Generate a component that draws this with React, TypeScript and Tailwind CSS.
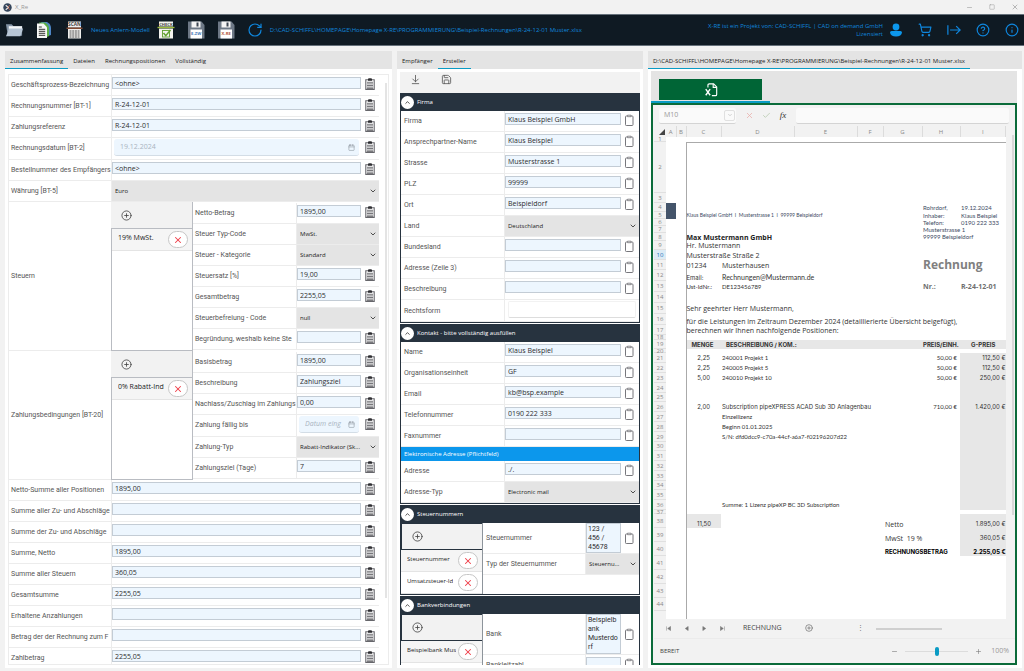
import { useState } from 'react';
import type { ReactNode } from 'react';
import {
    ArrowDownToLine,
    Calendar,
    Check,
    ChevronDown,
    ChevronUp,
    CircleHelp,
    CirclePlus,
    Info,
    Minus,
    Plus,
    RotateCw,
    Save,
    ShoppingCart,
    Square,
    X,
} from 'lucide-react';

const FILE_PATH = 'D:\\CAD-SCHIFFL\\HOMEPAGE\\Homepage X-RE\\PROGRAMMIERUNG\\Beispiel-Rechnungen\\R-24-12-01 Muster.xlsx';

type FieldKind = 'text' | 'select' | 'date' | 'area' | 'plain';

interface Field {
    id: string;
    label: string;
    value?: string;
    kind?: FieldKind;
    lines?: number;
}

interface Cell {
    col: number;
    text?: string;
    cls?: string;
    fill?: boolean;
}

interface SheetRow {
    h: number;
    cells?: Cell[];
}

const headFields: Field[] = [
    { id: 'bt23', label: 'Geschäftsprozess-Bezeichnung', value: '<ohne>' },
    { id: 'bt1', label: 'Rechnungsnummer [BT-1]', value: 'R-24-12-01' },
    { id: 'zref', label: 'Zahlungsreferenz', value: 'R-24-12-01' },
    { id: 'bt2', label: 'Rechnungsdatum [BT-2]', value: '19.12.2024', kind: 'date' },
    { id: 'bestell', label: 'Bestellnummer des Empfängers', value: '<ohne>' },
    { id: 'bt5', label: 'Währung [BT-5]', value: 'Euro', kind: 'select' },
];

const taxFields: Field[] = [
    { id: 'st-netto', label: 'Netto-Betrag', value: '1895,00' },
    { id: 'st-typ', label: 'Steuer Typ-Code', value: 'MwSt.', kind: 'select' },
    { id: 'st-kat', label: 'Steuer - Kategorie', value: 'Standard', kind: 'select' },
    { id: 'st-satz', label: 'Steuersatz [%]', value: '19,00' },
    { id: 'st-gesamt', label: 'Gesamtbetrag', value: '2255,05' },
    { id: 'st-frei', label: 'Steuerbefreiung - Code', value: 'null', kind: 'select' },
    { id: 'st-grund', label: 'Begründung, weshalb keine Ste' },
];

const paymentFields: Field[] = [
    { id: 'z-basis', label: 'Basisbetrag', value: '1895,00' },
    { id: 'z-beschr', label: 'Beschreibung', value: 'Zahlungsziel' },
    { id: 'z-nachlass', label: 'Nachlass/Zuschlag im Zahlungs', value: '0,00' },
    { id: 'z-faellig', label: 'Zahlung fällig bis', kind: 'date' },
    { id: 'z-typ', label: 'Zahlung-Typ', value: 'Rabatt-Indikator (Sk...', kind: 'select' },
    { id: 'z-ziel', label: 'Zahlungsziel (Tage)', value: '7' },
];

const sumFields: Field[] = [
    { id: 'sum-pos', label: 'Netto-Summe aller Positionen', value: '1895,00' },
    { id: 'sum-zu1', label: 'Summe aller Zu- und Abschläge' },
    { id: 'sum-zu2', label: 'Summe der Zu- und Abschläge' },
    { id: 'sum-netto', label: 'Summe, Netto', value: '1895,00' },
    { id: 'sum-steuer', label: 'Summe aller Steuern', value: '360,05' },
    { id: 'sum-gesamt', label: 'Gesamtsumme', value: '2255,05' },
    { id: 'sum-anz', label: 'Erhaltene Anzahlungen' },
    { id: 'sum-betrag', label: 'Betrag der der Rechnung zum F' },
    { id: 'sum-zahl', label: 'Zahlbetrag', value: '2255,05' },
];

const companyFields: Field[] = [
    { id: 'f-firma', label: 'Firma', value: 'Klaus Beispiel GmbH' },
    { id: 'f-name', label: 'Ansprechpartner-Name', value: 'Klaus Beispiel' },
    { id: 'f-str', label: 'Strasse', value: 'Musterstrasse 1' },
    { id: 'f-plz', label: 'PLZ', value: '99999' },
    { id: 'f-ort', label: 'Ort', value: 'Beispieldorf' },
    { id: 'f-land', label: 'Land', value: 'Deutschland', kind: 'select' },
    { id: 'f-bl', label: 'Bundesland' },
    { id: 'f-z3', label: 'Adresse (Zeile 3)' },
    { id: 'f-beschr', label: 'Beschreibung' },
    { id: 'f-rf', label: 'Rechtsform', kind: 'plain' },
];

const contactFields: Field[] = [
    { id: 'k-name', label: 'Name', value: 'Klaus Beispiel' },
    { id: 'k-org', label: 'Organisationseinheit', value: 'GF' },
    { id: 'k-mail', label: 'Email', value: 'kb@bsp.example' },
    { id: 'k-tel', label: 'Telefonnummer', value: '0190 222 333' },
    { id: 'k-fax', label: 'Faxnummer' },
];

const addressFields: Field[] = [
    { id: 'e-adr', label: 'Adresse', value: './.' },
    { id: 'e-typ', label: 'Adresse-Typ', value: 'Electronic mail', kind: 'select' },
];

const taxNumberFields: Field[] = [
    { id: 'sn-nr', label: 'Steuernummer', value: '123 /\n456 /\n45678', kind: 'area', lines: 3 },
    { id: 'sn-typ', label: 'Typ der Steuernummer', value: 'Steuernu...', kind: 'select' },
];

const bankFields: Field[] = [
    { id: 'b-bank', label: 'Bank', value: 'Beispielb\nank\nMusterdo\nrf', kind: 'area', lines: 4 },
    { id: 'b-blz', label: 'Bankleitzahl', value: '' },
];

const columns = [
    { name: 'A', w: 'w-[10px]' },
    { name: 'B', w: 'w-[10px]' },
    { name: 'C', w: 'w-[35px]' },
    { name: 'D', w: 'w-[73px]' },
    { name: 'E', w: 'w-[63px]' },
    { name: 'F', w: 'w-[26px]' },
    { name: 'G', w: 'w-[39px]' },
    { name: 'H', w: 'w-[38px]' },
    { name: 'I', w: 'w-auto' },
];

const wide = "font-['Inter',sans-serif]";
const body = "text-[7px] font-['Open_Sans',sans-serif]";
const small = 'pl-px text-[6px] text-[#3c4a63]';

const position = (menge: string, text: string, preis: string, gesamt: string): Cell[] => [
    { col: 2, text: menge, cls: `justify-end pr-[11px] ${wide}` },
    { col: 3, text, cls: 'pl-px' },
    { col: 7, text: preis, cls: 'justify-end pr-[3px]' },
    { col: 8, text: gesamt, cls: `justify-end ${wide}`, fill: true },
];

const grey: Cell[] = [{ col: 8, fill: true }];

const rows: SheetRow[] = [
    { h: 5 },
    { h: 51 },
    { h: 10 },
    { h: 9, cells: [{ col: 7, text: 'Rohrdorf,', cls: small }, { col: 8, text: '19.12.2024', cls: small }] },
    {
        h: 7,
        cells: [
            { col: 2, text: 'Klaus Beispiel GmbH  I  Musterstrasse 1  I  99999 Beispieldorf', cls: 'text-[5px] text-[#3c4a63]' },
            { col: 7, text: 'Inhaber:', cls: small },
            { col: 8, text: 'Klaus Beispiel', cls: small },
        ],
    },
    { h: 7, cells: [{ col: 7, text: 'Telefon:', cls: small }, { col: 8, text: '0190 222 333', cls: small }] },
    { h: 7, cells: [{ col: 7, text: 'Musterstrasse 1', cls: small }] },
    {
        h: 8,
        cells: [
            { col: 2, text: 'Max Mustermann GmbH', cls: `${body} font-bold text-[#222]` },
            { col: 7, text: '99999 Beispieldorf', cls: small },
        ],
    },
    { h: 9, cells: [{ col: 2, text: 'Hr. Mustermann', cls: body }] },
    { h: 10, cells: [{ col: 2, text: 'Musterstraße Straße 2', cls: body }] },
    {
        h: 10,
        cells: [
            { col: 2, text: '01234', cls: body },
            { col: 3, text: 'Musterhausen', cls: `pl-px ${body}` },
            { col: 7, text: 'Rechnung', cls: "pl-px font-['Open_Sans',sans-serif] text-[12px] font-bold text-[#808080]" },
        ],
    },
    { h: 11, cells: [{ col: 2, text: 'Email:', cls: `items-end ${wide}` }, { col: 3, text: 'Rechnungen@Mustermann.de', cls: 'items-end pl-px text-[7px]' }] },
    {
        h: 11,
        cells: [
            { col: 2, text: 'Ust-IdNr.:' },
            { col: 3, text: 'DE123456789', cls: 'pl-px' },
            { col: 7, text: 'Nr.:', cls: `pl-px ${body} font-bold text-[#6f6f6f]` },
            { col: 8, text: 'R-24-12-01', cls: `pl-px ${body} font-bold text-[#6f6f6f]` },
        ],
    },
    { h: 11 },
    { h: 11, cells: [{ col: 2, text: 'Sehr geehrter Herr Mustermann,', cls: body }] },
    {
        h: 11,
        cells: [{ col: 2, text: 'für die Leistungen im Zeitraum Dezember 2024 (detaillierierte Übersicht beigefügt),', cls: `items-end ${body}` }],
    },
    { h: 10, cells: [{ col: 2, text: 'berechnen wir Ihnen nachfolgende Positionen:', cls: body }] },
    { h: 5 },
    {
        h: 9,
        cells: [
            { col: 2, text: 'MENGE', cls: `pl-[5px] font-bold ${wide}`, fill: true },
            { col: 3, text: 'BESCHREIBUNG / KOM.:', cls: `pl-[5px] font-bold ${wide}`, fill: true },
            { col: 4, fill: true },
            { col: 5, fill: true },
            { col: 6, fill: true },
            { col: 7, text: 'PREIS/EINH.', cls: `pl-px font-bold ${wide}`, fill: true },
            { col: 8, text: 'G-PREIS', cls: `pl-[11px] font-bold ${wide}`, fill: true },
        ],
    },
    { h: 4 },
    { h: 10, cells: position('2,25', '240001 Projekt 1', '50,00 €', '112,50 €') },
    { h: 10, cells: position('2,25', '240005 Projekt 5', '50,00 €', '112,50 €') },
    { h: 10, cells: position('5,00', '240010 Projekt 10', '50,00 €', '250,00 €') },
    { h: 10, cells: grey },
    { h: 9, cells: grey },
    {
        h: 10,
        cells: [
            { col: 2, text: '2,00', cls: `justify-end pr-[11px] ${wide}` },
            { col: 3, text: 'Subscription pipeXPRESS ACAD Sub 3D Anlagenbau', cls: `pl-px ${wide}` },
            { col: 7, text: '710,00 €', cls: 'justify-end pr-[3px]' },
            { col: 8, text: '1.420,00 €', cls: `justify-end ${wide}`, fill: true },
        ],
    },
    { h: 10, cells: [{ col: 3, text: 'Einzellizenz', cls: 'pl-px' }, ...grey] },
    { h: 10, cells: [{ col: 3, text: 'Beginn 01.01.2025', cls: 'pl-px' }, ...grey] },
    { h: 10, cells: [{ col: 3, text: 'S/N: dfd0dcc9-c70a-44cf-a6a7-f02196207d22', cls: 'pl-px' }, ...grey] },
    { h: 9, cells: grey },
    { h: 10, cells: grey },
    { h: 10, cells: grey },
    { h: 10, cells: grey },
    { h: 9, cells: grey },
    { h: 10, cells: grey },
    { h: 10, cells: [{ col: 3, text: 'Summe: 1 Lizenz pipeXP BC 3D Subscription', cls: 'pl-px' }, ...grey] },
    { h: 4 },
    {
        h: 14,
        cells: [
            { col: 2, text: '11,50', cls: `items-end justify-end pr-[10px] pb-px ${wide}`, fill: true },
            { col: 6, text: 'Netto', cls: `items-end pl-[2px] ${body}` },
            { col: 8, text: '1.895,00 €', cls: `items-end justify-end pb-px ${wide}`, fill: true },
        ],
    },
    {
        h: 14,
        cells: [
            { col: 6, text: 'MwSt  19 %', cls: `items-end pl-[2px] ${body}` },
            { col: 8, text: '360,05 €', cls: `items-end justify-end pb-px ${wide}`, fill: true },
        ],
    },
    {
        h: 14,
        cells: [
            { col: 6, text: 'RECHNUNGSBETRAG', cls: `items-end pb-px pl-[2px] font-bold text-black ${wide}` },
            { col: 8, text: '2.255,05 €', cls: `items-end justify-end pb-px font-bold text-black ${wide}`, fill: true },
        ],
    },
    { h: 14 },
    { h: 14 },
    { h: 14 },
    { h: 13 },
];

function ClipboardFilled() {
    return (
        <svg viewBox="0 0 10 12" className="h-3 w-[10px]">
            <path d="M.8 1.8h8.4v9.6H.8z" fill="#fff" stroke="#66666b" strokeWidth="1.1" />
            <path d="M3 .6h1.1a1 1 0 0 1 1.8 0H7v2.2H3z" fill="#2f2f33" />
            <path d="M2 4.3h6M2 5.9h6M2 7.5h6M2 9.1h6M2 10.4h6" stroke="#55555a" strokeWidth=".8" />
        </svg>
    );
}

function ClipboardOutline() {
    return (
        <svg viewBox="0 0 10 12" className="h-3 w-[10px]" fill="none" stroke="#77777c">
            <rect x="1.5" y="2" width="7.5" height="9.5" rx=".8" />
            <path d="M3.5 1.2H7v1.5H3.5z" fill="#fff" strokeWidth=".8" />
        </svg>
    );
}

function FieldRow({ field, outline = false, labelClass }: { field: Field; outline?: boolean; labelClass: string }) {
    const kind = field.kind ?? 'text';
    const [value, setValue] = useState(field.value ?? '');
    const box = 'min-w-0 flex-1 border border-[#c3ccd5] bg-[#edf6fe] text-[7px] text-[#2e2e2e] outline-none';

    let height = 'h-[21px]';
    if (kind === 'area') height = field.lines === 4 ? 'h-[41px]' : 'h-[31px]';
    if (kind === 'date' || kind === 'plain') height = 'h-[22px]';

    return (
        <div className={`flex shrink-0 border-b border-[#ececec] ${height}`}>
            <label
                htmlFor={field.id}
                className={`flex shrink-0 items-center overflow-hidden font-['Roboto',sans-serif] text-[7px] whitespace-nowrap text-[#555] ${outline ? 'pt-px pl-[3px]' : 'pl-[2px]'} ${labelClass}`}
            >
                {field.label}
            </label>
            <div className="flex min-w-0 flex-1 border-l border-[#ececec]">
                {kind === 'select' && (
                    <div className="relative min-w-0 flex-1">
                        <select
                            id={field.id}
                            value={value}
                            onChange={(e) => setValue(e.target.value)}
                            className="block h-5 w-full appearance-none bg-[#e4e4e4] pl-[3px] text-[6px] text-[#222] outline-none"
                        >
                            <option>{field.value}</option>
                        </select>
                        <ChevronDown className="pointer-events-none absolute top-[6px] right-[2px] h-2 w-2 text-[#444]" strokeWidth={2.8} />
                    </div>
                )}
                {kind === 'plain' && (
                    <input
                        id={field.id}
                        value={value}
                        onChange={(e) => setValue(e.target.value)}
                        className="mx-[3px] mt-px h-[17px] min-w-0 flex-1 rounded-[2px] border border-[#f2f2f2] border-b-[#ddd] text-[7px] outline-none"
                    />
                )}
                {kind === 'date' && (
                    <div className="mx-[2px] mt-px flex h-[17px] min-w-0 flex-1 items-center rounded-[3px] border-b border-[#d3dde6] bg-[#edf6fe] pr-1 pl-[6px]">
                        <input
                            id={field.id}
                            value={value}
                            placeholder="Datum eing"
                            onChange={(e) => setValue(e.target.value)}
                            className="w-0 min-w-0 flex-1 bg-transparent text-[7px] text-[#a9b4be] outline-none placeholder:text-[#a9b4be] placeholder:italic"
                        />
                        <Calendar className="h-[7px] w-[7px] shrink-0 text-[#8d969e]" />
                    </div>
                )}
                {kind === 'text' && (
                    <input
                        id={field.id}
                        value={value}
                        onChange={(e) => setValue(e.target.value)}
                        className={`mt-[2px] h-3 px-[2px] ${box}`}
                    />
                )}
                {kind === 'area' && (
                    <textarea
                        id={field.id}
                        value={value}
                        onChange={(e) => setValue(e.target.value)}
                        className={`resize-none overflow-hidden pt-px pl-px font-['Roboto',sans-serif] leading-[9px] ${box}`}
                    />
                )}
                {kind !== 'select' && kind !== 'plain' && (
                    <button
                        type="button"
                        aria-label={`${field.label} einfügen`}
                        className={`ml-[3px] flex w-[15px] shrink-0 ${outline ? '' : 'pl-px'} ${kind === 'area' ? 'items-center' : 'items-start pt-[3px]'}`}
                    >
                        {outline ? <ClipboardOutline /> : <ClipboardFilled />}
                    </button>
                )}
            </div>
        </div>
    );
}

function EntryList({ items, dark = false }: { items: string[]; dark?: boolean }) {
    return (
        <div className={`flex w-[82px] shrink-0 flex-col border-r ${dark ? 'border-[#8d949b]' : 'border-[#b9bcc2]'}`}>
            <div
                className={`flex h-[27px] shrink-0 items-center bg-[#f2f2f2] pl-[10px] ${dark ? 'border border-r-0 border-[#27333f]' : 'border-b border-[#b9bcc2]'}`}
            >
                <button type="button" aria-label="Hinzufügen">
                    <CirclePlus className="h-[11px] w-[11px] text-[#444]" strokeWidth={1.8} />
                </button>
            </div>
            <ul className={dark ? 'flex-1' : 'flex-1 border-b border-l border-[#b9bcc2]'}>
                {items.map((item, i) => (
                    <li
                        key={item}
                        className={`flex h-[22px] items-center justify-between overflow-hidden border-b border-[#e4e4e4] pr-[4px] pl-[6px] ${i === 0 ? 'bg-[#f5f5f5]' : 'bg-white'}`}
                    >
                        <span className={`overflow-hidden pb-[3px] whitespace-nowrap text-[#222] ${dark ? 'text-[6px]' : 'text-[7px]'}`}>{item}</span>
                        <button
                            type="button"
                            aria-label={`${item} löschen`}
                            className="flex h-[17px] w-5 shrink-0 items-center justify-center rounded-full border border-[#c6c6c6] bg-white"
                        >
                            <X className="h-[10px] w-[10px] text-[#f0404a]" strokeWidth={2.5} />
                        </button>
                    </li>
                ))}
            </ul>
        </div>
    );
}

function Group({ label, items, fields }: { label: string; items: string[]; fields: Field[] }) {
    return (
        <div role="group" aria-label={label} className="flex shrink-0">
            <div className="flex w-[102px] shrink-0 items-center border-b border-[#ececec] pl-[2px] font-['Roboto',sans-serif] text-[7px] whitespace-nowrap text-[#555]">
                {label}
            </div>
            <EntryList items={items} />
            <div className="min-w-0 flex-1 py-px">
                {fields.map((field) => (
                    <FieldRow key={field.id} field={field} labelClass="w-[103px]" />
                ))}
            </div>
        </div>
    );
}

function Section({ title, children }: { title: string; children: ReactNode }) {
    const [open, setOpen] = useState(true);

    return (
        <section className="mb-px shrink-0 border border-[#27333f] bg-white">
            <h2 className="flex h-[17px] items-center bg-[#27333f] text-[6px] text-white">
                <button
                    type="button"
                    aria-label={title}
                    onClick={() => setOpen(!open)}
                    className="mr-[3px] flex h-[13px] w-[13px] items-center justify-center rounded-full bg-white"
                >
                    <ChevronUp className="h-[7px] w-[7px] text-[#333]" strokeWidth={2.8} />
                </button>
                {title}
            </h2>
            {open && children}
        </section>
    );
}

function Tabs({ items, active }: { items: string[]; active: number }) {
    return (
        <div role="tablist" className="flex h-[18px] shrink-0 bg-[#e4e4e4]">
            {items.map((item, i) => (
                <button
                    key={item}
                    type="button"
                    role="tab"
                    aria-selected={i === active}
                    className={`border-b px-[5px] pt-[3px] text-[6px] whitespace-nowrap text-[#222] ${i === active ? 'border-[#0a9bc4]' : 'border-transparent'}`}
                >
                    {item}
                </button>
            ))}
        </div>
    );
}

function FolderIcon() {
    return (
        <svg viewBox="0 0 20 16" className="h-4 w-[19px]">
            <path d="M1 2h6l2 2h9v10H3z" fill="#8393a5" />
            <path d="M4 4h14v6H4z" fill="#f3f6f8" />
            <path d="M1 14.5 4.5 6.5H19l-2.8 8z" fill="#b7c6d6" />
        </svg>
    );
}

function PagesIcon() {
    return (
        <svg viewBox="0 0 16 18" className="h-[18px] w-4">
            <path d="M5 1h6q4 2 4 6v7l-3 1z" fill="#4d86c6" />
            <path d="M3 1.5h6q4 2 4 6V15l-2 1z" fill="#5cae45" />
            <path d="M1 2.5h6.5L11 6.2V17H1z" fill="#f7f8f6" />
            <path d="M2.8 6h3M2.8 8.3h6.4M2.8 10.3h6.4M2.8 12.3h6.4M2.8 14.3h6.4" stroke="#333" />
        </svg>
    );
}

function ScanIcon() {
    return (
        <svg viewBox="0 0 17 18" className="h-[18px] w-[17px]">
            <path d="M2 .5h13v6H2zM2 8h13v9.5H2z" fill="#eeeeec" />
            <text x="8.5" y="5.3" fontSize="4.8" textAnchor="middle" fontWeight="bold" fill="#444">SCAN</text>
            <path d="M.5 7.2h16" stroke="#b8623c" />
            <path d="M3.5 10h10M3.5 12h10M3.5 14h10M3.5 16h10" stroke="#555" strokeDasharray="2 .7" />
        </svg>
    );
}

function CheckIcon() {
    return (
        <svg viewBox="0 0 18 18" className="h-[18px] w-[18px]">
            <path d="M2 .5h14v5H2zM2 7.5h14v10H2z" fill="#f3f3ee" />
            <text x="9" y="4.8" fontSize="4.2" textAnchor="middle" fontWeight="bold" fill="#444">CHECK</text>
            <path d="M.5 6.5h17" stroke="#9cbb3c" strokeWidth="1.4" />
            <rect x="5.5" y="9.5" width="7" height="6.5" fill="none" stroke="#5f9f2f" strokeWidth=".9" />
            <path d="m6.5 12 2.3 2.7L13.5 9" fill="none" stroke="#5f9f2f" strokeWidth="1.5" />
        </svg>
    );
}

function FloppyIcon({ text, color }: { text: string; color: string }) {
    return (
        <svg viewBox="0 0 18 18" className="h-[18px] w-[18px]">
            <path d="M1 .5h13.5L17.5 4v13.5H1z" fill="#6d7886" />
            <path d="M4.500.5h9v6h-9z" fill="#f4f4f4" />
            <path d="M9.5 1.5h2v4h-2z" fill="#3d4652" />
            <path d="M3.5 8.5H15v9H3.5z" fill="#fff" />
            <text x="9.2" y="14.3" fontSize="4.2" textAnchor="middle" fontWeight="bold" fill={color}>{text}</text>
        </svg>
    );
}

function ExcelFileIcon() {
    return (
        <svg viewBox="0 0 16 18" className="h-4 w-[14px]" fill="none" stroke="#fff" strokeWidth="1.3">
            <path d="M4.5 6V3.5Q4.5 2 6 2h5l3.5 3.5V14q0 1.5-1.5 1.5H9" />
            <path d="M10.5 2v4h4" />
            <path d="m2 8 5 7M7 8l-5 7" strokeWidth="1.6" />
        </svg>
    );
}

function TitleBar() {
    return (
        <div className="flex h-[14px] shrink-0 items-center px-[3px] text-[6px] text-[#999]">
            <svg viewBox="0 0 10 10" className="mr-[3px] h-[9px] w-[9px]">
                <circle cx="5" cy="5" r="4.7" fill="#33445a" />
                <path d="M3 2.5 6 5 3 7.5" stroke="#e8e8e8" strokeWidth="1.2" fill="none" />
                <path d="m7.4 2.6-2 2.4 2 2.4" stroke="#c96a50" strokeWidth="1.1" fill="none" />
            </svg>
            X_Re
            <div className="ml-auto flex items-center gap-[16px] pr-[2px]">
                <button type="button" aria-label="Minimieren"><Minus className="h-[7px] w-[7px]" /></button>
                <button type="button" aria-label="Maximieren"><Square className="h-[6px] w-[6px]" /></button>
                <button type="button" aria-label="Schließen"><X className="h-[8px] w-[8px]" /></button>
            </div>
        </div>
    );
}

function Toolbar() {
    return (
        <header className="flex h-8 shrink-0 items-center border-y border-[#65707a] bg-[#0f1a23] pl-[5px] text-[6px] text-[#0f86dd]">
            <button type="button" aria-label="Öffnen"><FolderIcon /></button>
            <button type="button" aria-label="Dokumente" className="ml-3"><PagesIcon /></button>
            <button type="button" aria-label="Scan" className="ml-[14px]"><ScanIcon /></button>
            <button type="button" className="ml-2 whitespace-nowrap">Neues Anlern-Modell</button>
            <button type="button" aria-label="Prüfen" className="ml-[7px]"><CheckIcon /></button>
            <button type="button" aria-label="Speichern E-ZW" className="ml-3"><FloppyIcon text="E-ZW" color="#3d78b8" /></button>
            <button type="button" aria-label="Speichern X-RE" className="ml-3"><FloppyIcon text="X-RE" color="#b5573a" /></button>
            <button type="button" aria-label="Neu laden" className="ml-3"><RotateCw className="h-4 w-4" strokeWidth={1.8} /></button>
            <span className="ml-[7px] whitespace-nowrap">{FILE_PATH}</span>
            <p className="mr-[6px] ml-auto text-right leading-[8px] whitespace-nowrap">
                X-RE ist ein Projekt von: CAD-SCHIFFL | CAD on demand GmbH
                <br />
                Lizensiert
            </p>
            <div className="flex items-center gap-[15px] pr-[5px]">
                <button type="button" aria-label="Benutzer">
                    <svg viewBox="0 0 14 14" className="h-[14px] w-[14px]" fill="#0c97ec">
                        <circle cx="7" cy="4" r="3.4" />
                        <path d="M1 9.6Q1 8 2.6 8h8.8Q13 8 13 9.6 12.4 13.6 7 13.6T1 9.6z" />
                    </svg>
                </button>
                <button type="button" aria-label="Warenkorb"><ShoppingCart className="h-[14px] w-[14px]" strokeWidth={2} /></button>
                <button type="button" aria-label="Abmelden">
                    <svg viewBox="0 0 16 14" className="h-[14px] w-[14px]" fill="none" stroke="currentColor" strokeWidth="1.4">
                        <path d="M1 1.5v11M3.5 7H15M10.5 2.5 15 7l-4.5 4.5" />
                    </svg>
                </button>
                <button type="button" aria-label="Hilfe"><CircleHelp className="h-[14px] w-[14px]" /></button>
                <button type="button" aria-label="Info"><Info className="h-[14px] w-[14px]" /></button>
            </div>
        </header>
    );
}

function SummaryPanel() {
    return (
        <section className="flex min-h-0 min-w-0 flex-col bg-white">
            <Tabs items={['Zusammenfassung', 'Dateien', 'Rechnungspositionen', 'Vollständig']} active={0} />
            <div className="mx-[3px] mt-[5px] mb-[3px] flex min-h-0 flex-1 overflow-hidden border border-[#ececec]">
                <div className="flex min-w-0 flex-1 flex-col">
                    {headFields.map((field) => (
                        <FieldRow key={field.id} field={field} labelClass="w-[102px]" />
                    ))}
                    <Group label="Steuern" items={['19% MwSt.']} fields={taxFields} />
                    <Group label="Zahlungsbedingungen [BT-20]" items={['0% Rabatt-Ind']} fields={paymentFields} />
                    {sumFields.map((field) => (
                        <FieldRow key={field.id} field={field} labelClass="w-[102px]" />
                    ))}
                </div>
                <div className="w-[9px] shrink-0 pt-2 pl-[6px]">
                    <div className="h-[515px] w-[2px] bg-[#e4e4e4]" />
                </div>
            </div>
        </section>
    );
}

function CreatorPanel() {
    return (
        <section className="flex min-h-0 min-w-0 flex-col bg-white">
            <Tabs items={['Empfänger', 'Ersteller']} active={1} />
            <div className="mx-[3px] mt-[3px] mb-[3px] flex min-h-0 flex-1 flex-col overflow-hidden">
                <div className="flex h-[21px] shrink-0 items-center gap-5 bg-[#f2f2f2] pb-[6px] pl-[10px] text-[#555]">
                    <button type="button" aria-label="Laden"><ArrowDownToLine className="h-[11px] w-[11px]" strokeWidth={1.8} /></button>
                    <button type="button" aria-label="Speichern"><Save className="h-[11px] w-[11px]" strokeWidth={1.8} /></button>
                </div>
                <Section title="Firma">
                    {companyFields.map((field) => (
                        <FieldRow key={field.id} field={field} outline labelClass="w-[103px]" />
                    ))}
                </Section>
                <Section title="Kontakt - bitte vollständig ausfüllen">
                    {contactFields.map((field) => (
                        <FieldRow key={field.id} field={field} outline labelClass="w-[103px]" />
                    ))}
                    <h3 className="h-[14px] bg-[#0c97ec] pl-[3px] text-[6px] leading-[14px] text-white">Elektronische Adresse (Pflichtfeld)</h3>
                    {addressFields.map((field) => (
                        <FieldRow key={field.id} field={field} outline labelClass="w-[103px]" />
                    ))}
                </Section>
                <Section title="Steuernummern">
                    <div className="flex">
                        <EntryList items={['Steuernummer', 'Umsatzsteuer-Id']} dark />
                        <div className="min-w-0 flex-1">
                            {taxNumberFields.map((field) => (
                                <FieldRow key={field.id} field={field} outline labelClass="w-[102px]" />
                            ))}
                        </div>
                    </div>
                </Section>
                <Section title="Bankverbindungen">
                    <div className="flex">
                        <EntryList items={['Beispielbank Mus']} dark />
                        <div className="min-w-0 flex-1">
                            {bankFields.map((field) => (
                                <FieldRow key={field.id} field={field} outline labelClass="w-[102px]" />
                            ))}
                        </div>
                    </div>
                </Section>
            </div>
        </section>
    );
}

function Sheet() {
    return (
        <table className="w-full table-fixed border-collapse bg-white font-['Lato',sans-serif] text-[6px] leading-none text-[#333]">
            <colgroup>
                <col className="w-3" />
                {columns.map((c) => (
                    <col key={c.name} className={c.w} />
                ))}
            </colgroup>
            <thead>
                <tr className="bg-[#f2f2f2] font-['Open_Sans',sans-serif] text-[#888]">
                    <th className="h-[11px] p-0">
                        <svg viewBox="0 0 10 10" className="ml-[5px] h-[6px] w-[6px]"><path d="M10 0v10H0z" fill="#444" /></svg>
                    </th>
                    {columns.map((c) => (
                        <th key={c.name} scope="col" className="h-[11px] border-r border-[#dcdcdc] p-0 text-center font-normal">{c.name}</th>
                    ))}
                </tr>
            </thead>
            <tbody>
                {rows.map((row, r) => (
                    <tr key={r}>
                        <th
                            scope="row"
                            className={`p-0 font-['Open_Sans',sans-serif] font-normal ${r === 9 ? 'bg-[#dcebf5] text-[#2272b9]' : 'bg-[#f2f2f2] text-[#888]'}`}
                        >
                            <div className="flex items-center justify-center border-b border-[#e0e0e0]" style={{ height: row.h }}>{r + 1}</div>
                        </th>
                        {columns.map((c, i) => {
                            const cell = row.cells?.find((entry) => entry.col === i);
                            const logo = i === 0 && (r === 3 || r === 4);
                            const edge = i === 2 && r > 0 ? 'border-l border-l-[#aaa]' : '';
                            const top = i >= 2 && r === 1 ? 'border-t border-t-[#aaa]' : '';
                            return (
                                <td key={c.name} className={`p-0 ${edge} ${top} ${logo ? 'bg-[#44546a]' : ''} ${cell?.fill ? 'bg-[#e7e7e7]' : ''}`}>
                                    {cell?.text && (
                                        <div
                                            className={`flex whitespace-pre ${cell.cls?.includes('items-end') ? '' : 'items-center'} ${cell.cls ?? ''}`}
                                            style={{ height: row.h }}
                                        >
                                            {cell.text}
                                        </div>
                                    )}
                                </td>
                            );
                        })}
                    </tr>
                ))}
            </tbody>
        </table>
    );
}

function NavArrow({ d, label }: { d: string; label: string }) {
    return (
        <button type="button" aria-label={label}>
            <svg viewBox="0 0 6 6" className="h-[5px] w-[5px]" fill="#777" stroke="#777" strokeWidth=".6"><path d={d} /></svg>
        </button>
    );
}

function SpreadsheetPanel() {
    const [zoom, setZoom] = useState(100);

    return (
        <section className="flex min-h-0 min-w-0 flex-col bg-white">
            <Tabs items={[FILE_PATH]} active={0} />
            <div className="mr-[5px] ml-[3px] mt-[2px] mb-[3px] flex min-h-0 flex-1 flex-col">
                <div className="h-8 shrink-0 bg-[#e4e4e4]">
                    <div className="flex h-8 w-[119px] items-end border-b-2 border-[#0a9bc4] px-2 pb-px">
                        <button type="button" aria-label="Excel" className="flex h-[21px] w-full items-center justify-center bg-[#006536]">
                            <ExcelFileIcon />
                        </button>
                    </div>
                </div>
                <div className="flex min-h-0 flex-1 flex-col border-2 border-[#0b6b3a] bg-[#f2f2f2] pl-px">
                    <div className="flex h-[21px] shrink-0 items-center pr-[6px] pl-[5px]">
                        <div className="flex h-4 w-[77px] items-center rounded-[2px] border-b border-[#d4d4d4] bg-[#fafafa] pr-px pl-[5px]">
                            <input aria-label="Namenfeld" defaultValue="M10" className="w-0 flex-1 bg-transparent text-[7px] text-[#999] outline-none" />
                            <button type="button" aria-label="Namen anzeigen" className="flex h-[11px] w-[11px] items-center justify-center rounded-[2px] border border-[#e0e0e0]">
                                <ChevronDown className="h-[6px] w-[6px] text-[#aaa]" />
                            </button>
                        </div>
                        <button type="button" aria-label="Abbrechen" className="ml-[9px]"><X className="h-[9px] w-[9px] text-[#e8aeaa]" /></button>
                        <button type="button" aria-label="Eingeben" className="ml-2"><Check className="h-[9px] w-[9px] text-[#b3c7aa]" /></button>
                        <button type="button" aria-label="Funktion einfügen" className="ml-2 w-2 font-['Liberation_Serif',serif] text-[9px] text-[#333] italic">fx</button>
                        <input aria-label="Bearbeitungsleiste" className="ml-[9px] h-4 min-w-0 flex-1 rounded-[2px] border-b border-[#d4d4d4] bg-[#fafafa] px-1 text-[7px] outline-none" />
                    </div>
                    <div className="flex min-h-0 flex-1">
                        <div className="flex min-w-0 flex-1 flex-col overflow-hidden">
                            <Sheet />
                            <div className="flex flex-1 bg-white">
                                <div className="w-3 bg-[#f2f2f2]" />
                                <div className="ml-5 border-l border-[#aaa]" />
                            </div>
                        </div>
                        <div className="w-[9px] shrink-0 pt-[9px] pl-[6px]">
                            <div className="h-[380px] w-[2px] bg-[#d8d8d8]" />
                        </div>
                    </div>
                    <div className="flex h-5 shrink-0 items-center border-b border-[#ebebeb] pl-3 text-[7px] text-[#444]">
                        <div className="flex gap-[13px]">
                            <NavArrow label="Erstes Blatt" d="M.5.5v5M5.500.5v5L2 3z" />
                            <NavArrow label="Vorheriges Blatt" d="M5 .5v5L1.5 3z" />
                            <NavArrow label="Nächstes Blatt" d="M1 .5v5L4.5 3z" />
                            <NavArrow label="Letztes Blatt" d="M.5.5v5L4 3zM5.500.5v5" />
                        </div>
                        <button type="button" className="ml-[18px] pb-px">RECHNUNG</button>
                        <button type="button" aria-label="Neues Blatt" className="ml-[23px]"><CirclePlus className="mb-[2px] h-2 w-2 text-[#666]" /></button>
                        <div className="ml-auto flex items-center">
                            <span className="text-[#777]">⋮</span>
                            <div className="mr-[73px] ml-3 h-[2px] w-[66px] bg-[#cfcfcf]" />
                        </div>
                    </div>
                    <div className="flex h-6 shrink-0 items-center pr-[6px] pl-[6px] text-[6px] text-[#444]">
                        BEREIT
                        <button type="button" aria-label="Verkleinern" className="ml-auto"><Minus className="h-[7px] w-[7px] text-[#777]" /></button>
                        <div className="mx-[7px] flex h-3 w-[63px] items-center">
                            <input
                                type="range"
                                aria-label="Zoom"
                                min={0}
                                max={200}
                                value={zoom}
                                onChange={(e) => setZoom(Number(e.target.value))}
                                className="h-px w-full appearance-none bg-[#dcdcdc] [&::-webkit-slider-thumb]:h-[9px] [&::-webkit-slider-thumb]:w-1 [&::-webkit-slider-thumb]:appearance-none [&::-webkit-slider-thumb]:rounded-[2px] [&::-webkit-slider-thumb]:bg-[#0a9bc4]"
                            />
                        </div>
                        <button type="button" aria-label="Vergrößern"><Plus className="h-[7px] w-[7px] text-[#777]" /></button>
                        <span className="ml-[9px] text-[7px] text-[#999]">{zoom}%</span>
                    </div>
                </div>
            </div>
        </section>
    );
}

export default function App() {
    return (
        <div className="flex h-screen flex-col overflow-hidden bg-[#f2f2f2] font-['Open_Sans','Noto_Sans',sans-serif]">
            <TitleBar />
            <Toolbar />
            <main className="mt-[5px] mb-[3px] grid min-h-0 flex-1 grid-cols-[387fr_246fr_374fr] gap-[5px] pr-[2px] pl-[5px]">
                <SummaryPanel />
                <CreatorPanel />
                <SpreadsheetPanel />
            </main>
        </div>
    );
}
